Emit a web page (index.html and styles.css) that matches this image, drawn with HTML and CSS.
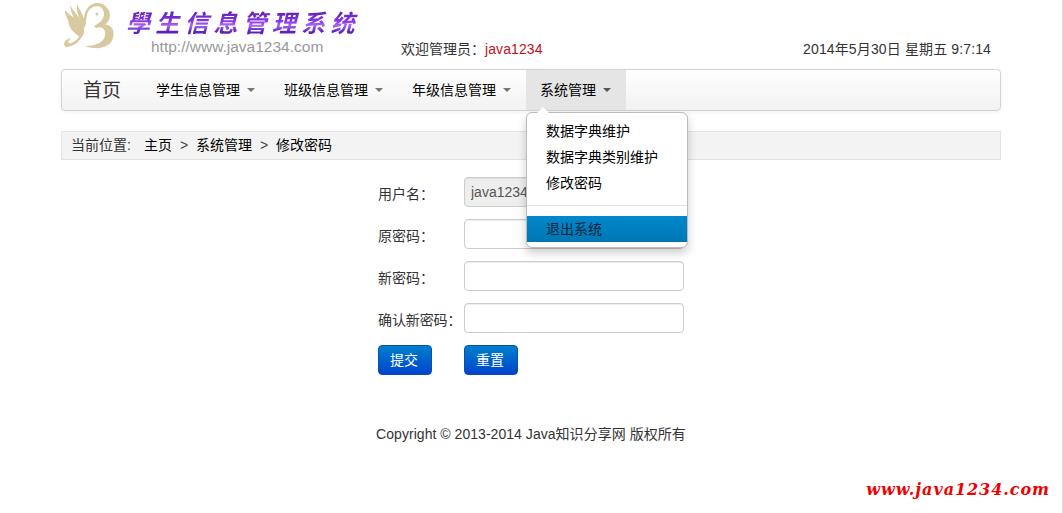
FILE: index.html
```html
<!DOCTYPE html>
<html lang="zh-CN">
<head>
<meta charset="utf-8">
<title>学生信息管理系统</title>
<link rel="stylesheet" href="styles.css">
</head>
<body>
<div class="page">
  <header class="header">
    <div class="logo">
      <svg class="bird" viewBox="0 0 56 50" width="56" height="50">
        <g fill="#d8c9a0">
          <path d="M2 9 C8 17 16 17 20 25 C22 29 21 34 19 36 C15 32 8 28 2 12Z"/>
          <path d="M7 3 C9 10 17 15 21 25 L20 29 C14 20 8 17 7 3Z"/>
          <path d="M14 3 C17 10 23 17 22 27 C18 20 13 14 14 3Z"/>
          <path d="M5 19 C8 25 16 29 20 33 L18 37 C12 32 6 29 5 19Z"/>
          <path d="M19 25 C23 34 15 45 3 46 C-1 43 2 38 8 37 C4 41 5 43 8 42 C15 40 18 34 19 25Z"/>
          <path d="M21 21 C20 8 28 1 36 2 C45 4 49 12 46 19 C43 24 39 26 33 27 L31 25 C37 22 41 18 41 13 C41 6 35 4 30 6 C24 9 23 15 23 25Z"/>
          <path d="M35 24 C46 21 53 27 50 37 C47 48 32 49 22 45 C34 45 41 41 42 34 C43 29 40 26 35 26Z"/>
        </g>
        <circle cx="34" cy="13" r="1.5" fill="#d3c7bd"/>
      </svg>
      <div class="logo-text">
        <div class="logo-title">學生信息管理系统</div>
        <div class="logo-url">http://www.java1234.com</div>
      </div>
    </div>
    <div class="welcome">欢迎管理员：<span class="user">java1234</span></div>
    <div class="clock">2014年5月30日 星期五 9:7:14</div>
  </header>

  <nav class="navbar">
    <a class="brand">首页</a>
    <a class="nav-item">学生信息管理<span class="caret"></span></a>
    <a class="nav-item">班级信息管理<span class="caret"></span></a>
    <a class="nav-item">年级信息管理<span class="caret"></span></a>
    <div class="nav-item open">系统管理<span class="caret"></span>
      <div class="dropdown">
        <a class="option">数据字典维护</a>
        <a class="option">数据字典类别维护</a>
        <a class="option">修改密码</a>
        <div class="divider"></div>
        <a class="option active">退出系统</a>
      </div>
    </div>
  </nav>

  <div class="breadcrumb">
    <span class="where">当前位置:</span>
    <a>主页</a><span class="sep">&gt;</span><a>系统管理</a><span class="sep">&gt;</span><a>修改密码</a>
  </div>

  <form class="form">
    <label>用户名：</label><input type="text" value="java1234" readonly>
    <label>原密码：</label><input type="password">
    <label>新密码：</label><input type="password">
    <label class="tight">确认新密码：</label><input type="password">
    <button type="button">提交</button><button type="button">重置</button>
  </form>

  <footer class="footer">Copyright © 2013-2014 Java知识分享网 版权所有</footer>
</div>
<div class="watermark">www.java1234.com</div>
</body>
</html>
```
FILE: styles.css
```css
* { box-sizing: border-box; }
body {
  margin: 0;
  height: 513px;
  overflow: hidden;
  position: relative;
  border-right: 1px solid #dedede;
  background: #fff;
  color: #333;
  font: 14px/20px "Liberation Sans", "Noto Sans CJK SC", sans-serif;
}
.page { width: 940px; margin-left: 61px; }
.header { display: flex; height: 69px; }
.logo { display: flex; width: 340px; padding-left: 2px; }
.bird { flex: none; margin-top: 1px; }
.logo-text { padding: 5px 0 0 7px; }
.logo-title {
  height: 34px;
  line-height: 34px;
  font-family: "Noto Sans CJK TC", sans-serif;
  font-size: 24px;
  font-weight: 700;
  font-style: italic;
  letter-spacing: 5.2px;
  white-space: nowrap;
  color: transparent;
  background: linear-gradient(#5a22b0 20%, #8a35e8 48%, #a868ee 60%, #5b22c0 78%);
  -webkit-background-clip: text;
  background-clip: text;
}
.logo-url {
  margin-left: 25px;
  font-family: "Liberation Sans", sans-serif;
  font-size: 15.5px;
  line-height: 16px;
  color: #999;
}
.welcome { padding-top: 39px; }
.user { color: #c0101c; letter-spacing: .1px; }
.clock { margin: 39px 10px 0 auto; letter-spacing: .13px; }
.navbar {
  display: flex;
  height: 42px;
  border: 1px solid #d4d4d4;
  border-radius: 4px;
  background: linear-gradient(#fff, #f2f2f2);
  box-shadow: 0 1px 4px rgba(0, 0, 0, .065);
}
.brand {
  width: 80px;
  padding-left: 21px;
  font-size: 19px;
  line-height: 41px;
}
.nav-item {
  position: relative;
  width: 128px;
  padding-left: 14px;
  line-height: 40px;
  color: #000;
  white-space: nowrap;
}
.open { width: 100px; background: #e5e5e5; }
.caret {
  display: inline-block;
  margin: 0 0 3px 7px;
  border: 4px solid transparent;
  border-top-color: #777;
  border-bottom: 0;
}
.open .caret { border-top-color: #555; }
.dropdown {
  position: absolute;
  top: 42px;
  left: 0;
  z-index: 2;
  width: 162px;
  padding: 5px 0 5px;
  border: 1px solid #bbb;
  border-radius: 6px;
  background: #fff;
  box-shadow: 0 5px 10px rgba(0, 0, 0, .2);
}
.dropdown::before {
  content: "";
  position: absolute;
  top: -6px;
  left: 10px;
  border: 6px solid transparent;
  border-top: 0;
  border-bottom-color: #fff;
}
.option {
  display: block;
  height: 26px;
  padding-left: 19px;
  line-height: 26px;
}
.divider { height: 1px; margin: 9px 0 10px; background: #e2e2e2; }
.active { background: linear-gradient(#0088cc, #0077b3); color: #10233a; }
.breadcrumb {
  display: flex;
  height: 29px;
  margin-top: 20px;
  padding-left: 9px;
  border: 1px solid #e3e3e3;
  background: #f3f3f3;
  line-height: 27px;
  color: #000;
}
.where { width: 73px; color: #333; }
.sep { width: 24px; text-align: center; color: #444; }
.form {
  display: grid;
  grid-template-columns: 86px 220px;
  row-gap: 12px;
  margin: 17px 0 0 317px;
}
label { line-height: 34px; height: 30px; white-space: nowrap; }
.tight { letter-spacing: -.1px; }
input {
  width: 220px;
  height: 30px;
  margin: 0;
  padding: 4px 6px;
  border: 1px solid #ccc;
  border-radius: 4px;
  background: #fff;
  box-shadow: inset 0 1px 1px rgba(0, 0, 0, .075);
  color: #555;
  font: inherit;
}
input[readonly] { background: #eee; }
button {
  width: 54px;
  height: 30px;
  padding: 0 2px 0 0;
  border: 1px solid #0a4fae;
  border-radius: 4px;
  background: linear-gradient(#0080cc, #0044cc);
  color: #fff;
  font: inherit;
}
.footer { margin-top: 49px; text-align: center; letter-spacing: .04px; }
.watermark {
  position: absolute;
  right: 12px;
  bottom: 12px;
  font: italic 700 16px/22px "DejaVu Serif", serif;
  letter-spacing: .95px;
  color: #f00000;
}
```
